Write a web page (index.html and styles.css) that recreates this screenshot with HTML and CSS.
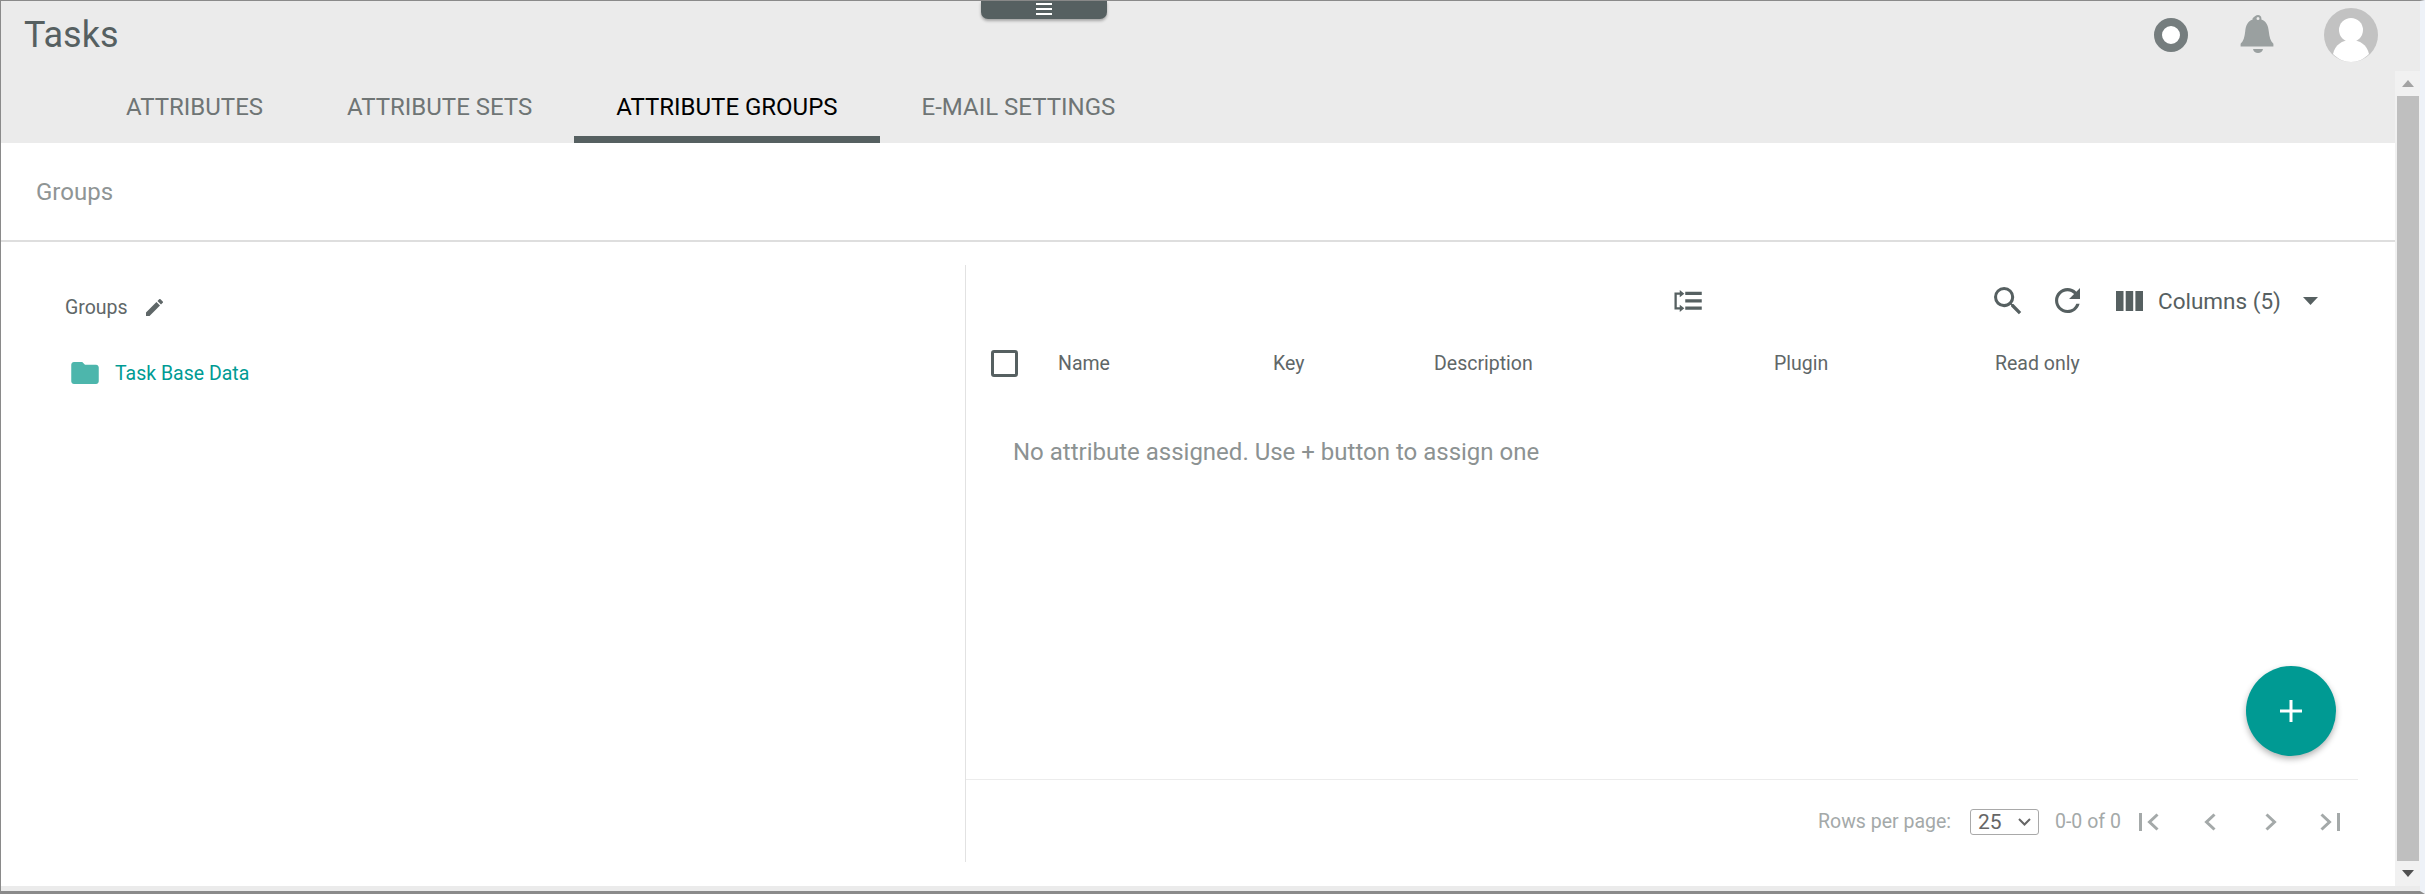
FILE: index.html
```html
<!DOCTYPE html>
<html lang="en">
<head>
  <meta charset="UTF-8" />
  <title>Tasks</title>
  <link rel="stylesheet" href="styles.css">
</head>
<body>
<div class="window">

  <!-- Header -->
  <header class="topbar">
    <div class="topbar-row">
      <h1 class="title">Tasks</h1>
      <div class="menu-handle">
        <svg width="16" height="12" viewBox="0 0 16 12"><path d="M0 1h16M0 6h16M0 11h16" stroke="#fff" stroke-width="2"/></svg>
      </div>
      <div class="user-icons">
        <svg class="ring" width="36" height="36" viewBox="0 0 36 36"><circle cx="18" cy="18" r="13" fill="#fff" stroke="#757d7e" stroke-width="8"/></svg>
        <svg class="bell" width="36" height="42" viewBox="0 0 36 42"><path fill="#9aa0a0" fill-rule="evenodd" d="M18 1c2 0 3.400 1.500 3.400 3.300v1.200c5 1.800 6.800 6 7.400 12 .6 5.500 1.600 9.500 4.600 12.200v2.800H.6v-2.800c3-2.700 4-6.700 4.600-12.200.6-6 2.400-10.200 7.400-12V4.300C14.600 2.500 16 1 18 1zm0 2a1.500 1.500 0 1 0 0 3 1.500 1.500 0 0 0 0-3zM13 35h10c-.4 2.500-2.500 4-5 4s-4.600-1.500-5-4z"/></svg>
        <svg class="avatar" width="54" height="54" viewBox="0 0 54 54"><circle cx="27" cy="27" r="27" fill="#c2c2c2"/><circle cx="27" cy="22" r="12" fill="#fff"/><path fill="#fff" d="M9 46c2-9 9-14 18-14s16 5 18 14c-5 5-11 8-18 8S14 51 9 46z"/></svg>
      </div>
    </div>
    <nav class="tabs">
      <a class="tab">ATTRIBUTES</a>
      <a class="tab">ATTRIBUTE SETS</a>
      <a class="tab active">ATTRIBUTE GROUPS</a>
      <a class="tab">E-MAIL SETTINGS</a>
    </nav>
  </header>

  <div class="section-title">Groups</div>

  <!-- Main content -->
  <main class="content">
    <section class="tree-panel">
      <div class="tree-head">
        <span>Groups</span>
        <svg width="17" height="17" viewBox="3 3 18 18"><path fill="#5f6768" d="M3 17.250V21h3.750L17.810 9.940l-3.750-3.750L3 17.250zM20.710 7.040a1 1 0 0 0 0-1.410l-2.340-2.340a1 1 0 0 0-1.410 0l-1.830 1.830 3.750 3.750 1.830-1.830z"/></svg>
      </div>
      <div class="tree-item">
        <svg width="28" height="22" viewBox="2 4 20 16"><path fill="#4db6ac" d="M10 4H4c-1.100 0-2 .9-2 2v12c0 1.100.9 2 2 2h16c1.100 0 2-.9 2-2V8c0-1.100-.9-2-2-2h-8l-2-2z"/></svg>
        <span>Task Base Data</span>
      </div>
    </section>

    <section class="table-panel">
      <div class="toolbar">
        <svg class="tool-assign" width="30" height="22" viewBox="0 0 30 24"><path fill="none" stroke="#566061" stroke-width="2.500" d="M7 4H1.500v16H7"/><path fill="#566061" d="M6 0l5 4-5 4zM6 16l5 4-5 4zM12 2h18v3.500H12zM12 10h18v3.500H12zM12 18h18v3.500H12z"/></svg>
        <svg class="tool-search" width="28" height="28" viewBox="3 3 18 18"><path fill="#566061" d="M15.500 14h-.79l-.28-.27A6.470 6.470 0 0 0 16 9.500 6.500 6.500 0 1 0 9.500 16c1.610 0 3.090-.59 4.230-1.570l.27.280v.79l5 4.990L20.490 19l-4.990-5zm-6 0C7.010 14 5 11.990 5 9.500S7.010 5 9.500 5 14 7.010 14 9.500 11.990 14 9.500 14z"/></svg>
        <svg class="tool-refresh" width="25" height="25" viewBox="4 4 16 16"><path fill="#566061" d="M17.650 6.350A7.958 7.958 0 0 0 12 4c-4.420 0-7.990 3.580-7.990 8s3.570 8 7.990 8c3.730 0 6.840-2.550 7.730-6h-2.080A5.990 5.990 0 0 1 12 18c-3.310 0-6-2.690-6-6s2.690-6 6-6c1.660 0 3.140.69 4.220 1.780L13 11h7V4l-2.350 2.350z"/></svg>
        <svg class="tool-columns" width="27" height="20" viewBox="0 0 27 20"><path fill="#566061" d="M0 0h7.500v20H0zM9.700 0h7.500v20H9.700zM19.400 0H27v20h-7.600z"/></svg>
        <span class="columns-label">Columns (5)</span>
        <svg class="columns-caret" width="15" height="8" viewBox="0 0 15 8"><path fill="#566061" d="M0 0h15L7.500 8z"/></svg>
      </div>

      <div class="table-head">
        <span class="checkbox"></span>
        <span>Name</span>
        <span>Key</span>
        <span>Description</span>
        <span>Plugin</span>
        <span>Read only</span>
      </div>

      <p class="empty-note">No attribute assigned. Use + button to assign one</p>

      <div class="pager">
        <span>Rows per page:</span>
        <span class="rows-select">25
          <svg width="13" height="8" viewBox="0 0 13 8"><path fill="none" stroke="#666" stroke-width="2" d="M1 1l5.500 5.500L12 1"/></svg>
        </span>
        <span class="range">0-0 of 0</span>
        <svg class="nav-first" width="20" height="18" viewBox="0 0 20 18"><path fill="none" stroke="#a4a9a9" stroke-width="3" d="M1.500 0v18M18.500 1.500L10.500 9l8 7.500"/></svg>
        <svg class="nav-prev" width="13" height="18" viewBox="0 0 13 18"><path fill="none" stroke="#a4a9a9" stroke-width="3" d="M11.500 1.500L3.500 9l8 7.500"/></svg>
        <svg class="nav-next" width="13" height="18" viewBox="0 0 13 18"><path fill="none" stroke="#a4a9a9" stroke-width="3" d="M1.500 1.500l8 7.500-8 7.500"/></svg>
        <svg class="nav-last" width="20" height="18" viewBox="0 0 20 18"><path fill="none" stroke="#a4a9a9" stroke-width="3" d="M18.500 0v18M1.500 1.500l8 7.500-8 7.500"/></svg>
      </div>

      <button class="fab" type="button">
        <svg width="22" height="22" viewBox="0 0 22 22"><path stroke="#fff" stroke-width="3" d="M11 0v22M0 11h22"/></svg>
      </button>
    </section>
  </main>

  <div class="bottom-band"></div>

  <!-- Scrollbar -->
  <div class="scrollbar">
    <div class="scroll-btn"><svg width="12" height="7" viewBox="0 0 12 7"><path fill="#a3a3a3" d="M6 0l6 7H0z"/></svg></div>
    <div class="scroll-thumb"></div>
    <div class="scroll-btn"><svg width="12" height="7" viewBox="0 0 12 7"><path fill="#505050" d="M0 0h12L6 7z"/></svg></div>
  </div>
</div>
</body>
</html>
```

FILE: styles.css
```css
* {
  box-sizing: border-box;
}
html, body {
  margin: 0;
  height: 100%;
  overflow: hidden;
}
body {
  font-family: Roboto, "Liberation Sans", sans-serif;
  background: #fff;
}
.window {
  position: relative;
  display: flex;
  flex-direction: column;
  width: 2425px;
  height: 894px;
  border-top: 1px solid #8a8a8a;
  border-left: 1px solid #8a8a8a;
  border-bottom: 3px solid #8a8a8a;
  border-right: 5px solid #eef2f8;
}

/* header */
.topbar {
  height: 142px;
  background: #ebebeb;
  flex-shrink: 0;
}
.topbar-row {
  position: relative;
  height: 84px;
  display: flex;
  justify-content: space-between;
  align-items: flex-start;
}
.title {
  margin: 13px 0 0 23px;
  font-size: 36px;
  line-height: 42px;
  font-weight: 400;
  color: #566061;
}
.menu-handle {
  position: absolute;
  left: 980px;
  top: 0;
  width: 126px;
  height: 18px;
  background: #566061;
  border-radius: 0 0 7px 7px;
  box-shadow: 0 2px 3px rgba(0, 0, 0, 0.3);
  display: flex;
  justify-content: center;
  padding-top: 2px;
}
.user-icons {
  display: flex;
  align-items: flex-start;
  margin-right: 42px;
}
.ring {
  margin-top: 16px;
}
.bell {
  margin: 13px 0 0 51px;
}
.avatar {
  margin: 7px 0 0 48px;
}
.tabs {
  display: flex;
  padding-left: 83px;
}
.tab {
  height: 58px;
  padding: 0 42px 8px;
  display: flex;
  align-items: center;
  font-size: 24px;
  color: #6f7575;
  border-bottom: 7px solid transparent;
}
.tab.active {
  color: #000;
  border-bottom-color: #566061;
}

.section-title {
  height: 99px;
  flex-shrink: 0;
  padding: 0 35px;
  display: flex;
  align-items: center;
  font-size: 24px;
  color: #8f9595;
  border-bottom: 2px solid #dedede;
}

/* main */
.content {
  flex: 1;
  display: flex;
  padding-top: 23px;
  min-height: 0;
}
.tree-panel {
  width: 965px;
  height: 597px;
  border-right: 1px solid #e2e2e2;
  padding: 25px 0 0 64px;
}
.tree-head {
  display: flex;
  align-items: center;
  gap: 18px;
  height: 34px;
  font-size: 19.500px;
  color: #5f6768;
}
.tree-item {
  display: flex;
  align-items: center;
  gap: 16px;
  margin: 31px 0 0 6px;
  height: 36px;
  font-size: 19.500px;
  color: #009b94;
}

.table-panel {
  position: relative;
  width: 1392px;
  height: 597px;
  display: flex;
  flex-direction: column;
}
.toolbar {
  height: 60px;
  display: flex;
  align-items: center;
  padding-top: 1px;
  margin-top: 5px;
}
.tool-assign {
  margin-left: 707px;
}
.tool-search {
  margin-left: 291px;
}
.tool-refresh {
  margin-left: 33px;
}
.tool-columns {
  margin-left: 36px;
}
.columns-label {
  margin-left: 15px;
  font-size: 22.500px;
  color: #566061;
}
.columns-caret {
  margin-left: 22px;
}

.table-head {
  display: grid;
  grid-template-columns: 67px 215px 161px 340px 221px auto;
  align-items: center;
  height: 40px;
  margin-top: 13px;
  padding-left: 25px;
  font-size: 19.500px;
  color: #5f6768;
}
.checkbox {
  width: 27px;
  height: 27px;
  border: 3px solid #566061;
  border-radius: 3px;
}
.empty-note {
  margin: 54px 0 0 47px;
  font-size: 24px;
  line-height: 30px;
  color: #8c9292;
}
.pager {
  margin-top: auto;
  height: 83px;
  border-top: 1px solid #ececec;
  display: flex;
  align-items: center;
  padding: 1px 0 0 852px;
  font-size: 19.500px;
  color: #a4a9a9;
}
.rows-select {
  margin-left: 19px;
  width: 69px;
  height: 26px;
  border: 1px solid #a9a9a9;
  border-radius: 3px;
  display: flex;
  align-items: center;
  justify-content: space-between;
  padding: 0 7px;
  font-size: 21px;
  color: #666;
}
.range {
  margin-left: 16px;
}
.nav-first {
  margin-left: 18px;
}
.nav-prev {
  margin-left: 44px;
}
.nav-next {
  margin-left: 49px;
}
.nav-last {
  margin-left: 42px;
}
.fab {
  position: absolute;
  left: 1280px;
  top: 401px;
  width: 90px;
  height: 90px;
  border: none;
  border-radius: 50%;
  background: #009a93;
  box-shadow: 0 3px 6px rgba(0, 0, 0, 0.3);
  display: flex;
  align-items: center;
  justify-content: center;
}

.bottom-band {
  height: 5px;
  background: #ebebeb;
  flex-shrink: 0;
}

/* browser scrollbar */
.scrollbar {
  position: absolute;
  top: 70px;
  right: 0;
  bottom: 5px;
  width: 25px;
  background: #f1f1f1;
  display: flex;
  flex-direction: column;
}
.scroll-btn {
  height: 25px;
  display: flex;
  align-items: center;
  justify-content: center;
  flex-shrink: 0;
}
.scroll-thumb {
  flex: 1;
  background: #bfbfbf;
  margin: 0 1px 0 2px;
}
```
